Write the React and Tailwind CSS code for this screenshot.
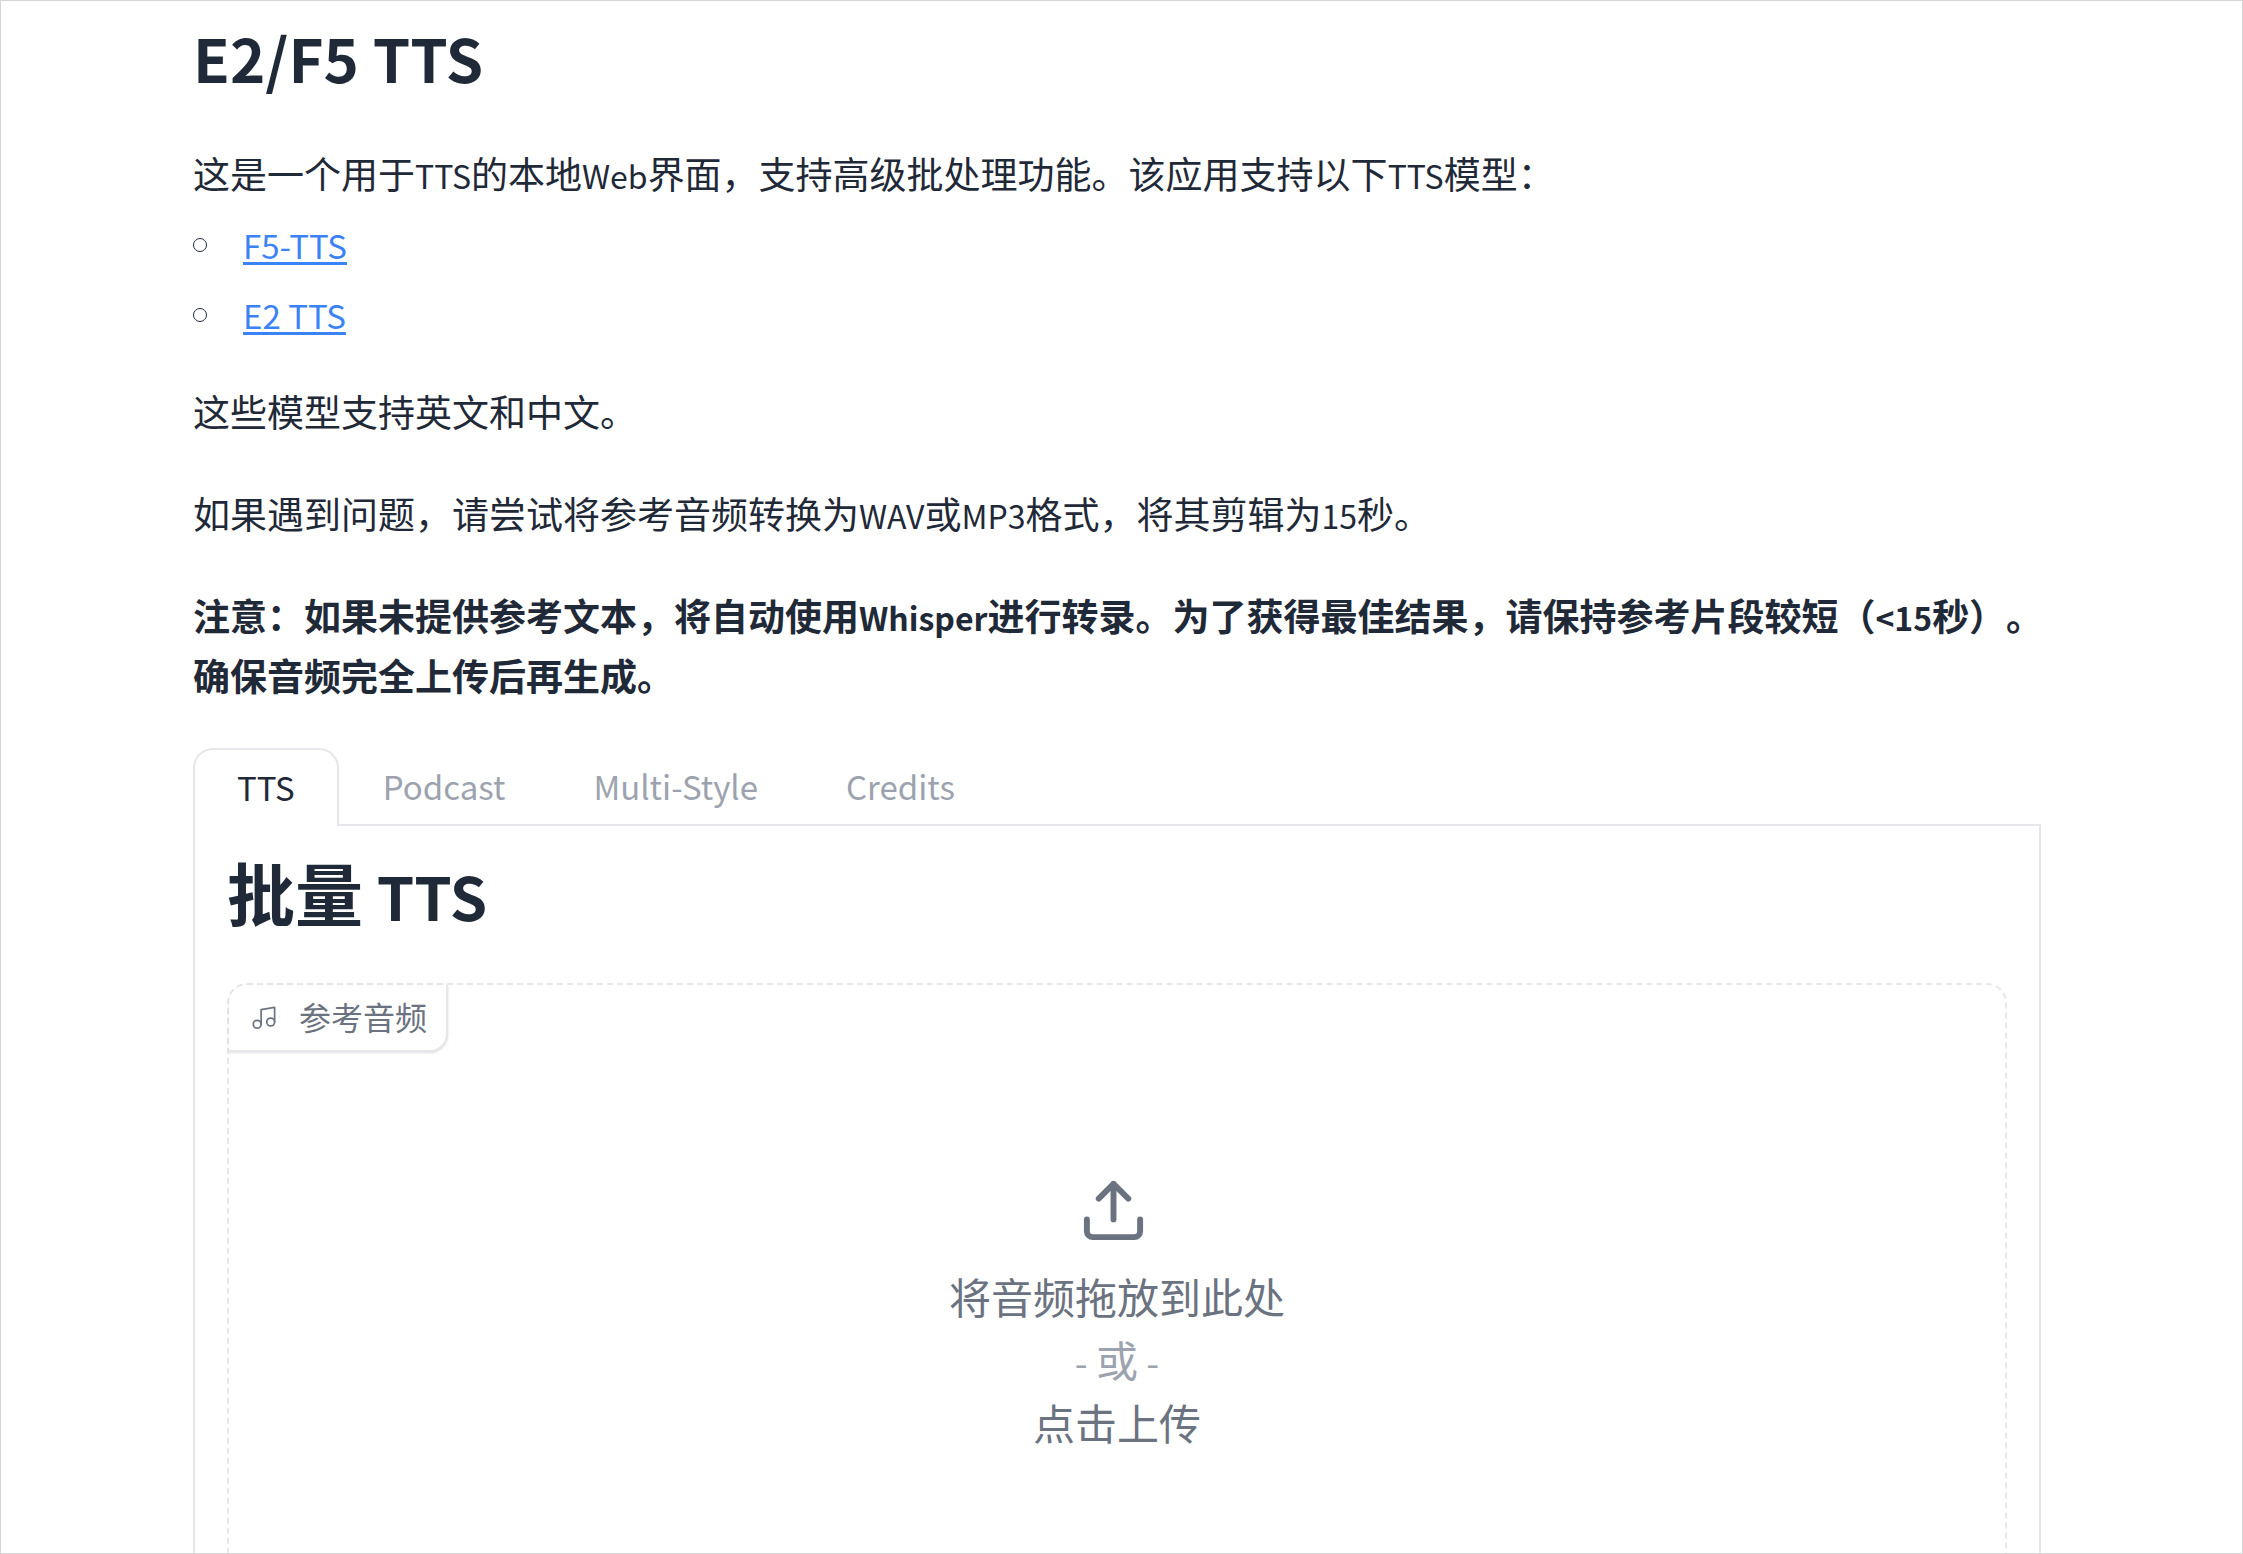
import { useState } from "react";

const models = [
	{ name: "F5-TTS", href: "#f5-tts" },
	{ name: "E2 TTS", href: "#e2-tts" },
];

const tabs = ["TTS", "Podcast", "Multi-Style", "Credits"];

// Latin runs are set a little smaller than the Chinese around them
const En = ({ children }) => (
	<span className="text-[32px] leading-none">{children}</span>
);

const MusicIcon = () => (
	<svg
		viewBox="0 0 24 24"
		className="size-[27px]"
		fill="none"
		stroke="currentColor"
		strokeWidth="1.5"
		strokeLinecap="round"
		strokeLinejoin="round"
	>
		<path d="M9 18V5l12-2v13" />
		<circle cx="5.5" cy="18" r="3.5" />
		<circle cx="17.5" cy="16" r="3.5" />
	</svg>
);

const UploadIcon = () => (
	<svg
		viewBox="0 0 24 24"
		className="mr-2 size-[71px]"
		fill="none"
		stroke="currentColor"
		strokeWidth="2"
		strokeLinecap="round"
		strokeLinejoin="round"
	>
		<path d="M21 15v4a2 2 0 0 1-2 2H5a2 2 0 0 1-2-2v-4" />
		<polyline points="17 8 12 3 7 8" />
		<line x1="12" y1="3" x2="12" y2="15" />
	</svg>
);

const Intro = () => (
	<section className="text-[37px] leading-[60px]">
		<h1 className="text-[60px] leading-[80px] font-semibold">E2/F5 TTS</h1>

		<p className="mt-[46px]">
			这是一个用于<En>TTS</En>的本地<En>Web</En>
			界面，支持高级批处理功能。该应用支持以下<En>TTS</En>模型：
		</p>

		<ul className="mt-3 flex flex-col gap-2.5">
			{models.map((model) => (
				<li key={model.name} className="flex items-center gap-9 text-[33px]">
					<span className="size-3.5 rounded-full border border-[#1f2937]" />
					<a
						href={model.href}
						className="text-[#3b82f6] underline decoration-3 underline-offset-3"
					>
						{model.name}
					</a>
				</li>
			))}
		</ul>

		<p className="mt-9">这些模型支持英文和中文。</p>

		<p className="mt-[42px]">
			如果遇到问题，请尝试将参考音频转换为<En>WAV</En>或<En>MP3</En>
			格式，将其剪辑为<En>15</En>秒。
		</p>

		<p className="mt-[42px] -mr-4 font-bold">
			注意：如果未提供参考文本，将自动使用<En>Whisper</En>
			进行转录。为了获得最佳结果，请保持参考片段较短（<En>&lt;15</En>
			秒）。确保音频完全上传后再生成。
		</p>
	</section>
);

const AudioUpload = () => (
	<div className="relative mt-[41px] h-[660px] rounded-[20px] border-2 border-dashed border-gray-200">
		<div className="absolute top-0 left-0 flex h-[67px] items-center gap-[21px] rounded-tl-[18px] rounded-br-[18px] border-r-2 border-b-2 border-gray-200 bg-white pr-[19px] pl-[22px] text-[32px] leading-none text-[#6b7280] shadow-sm">
			<MusicIcon />
			<span className="pb-1">参考音频</span>
		</div>
		<button
			type="button"
			className="flex h-full w-full cursor-pointer flex-col items-center pt-[190px] text-[42px] leading-[63px] text-[#6b7280]"
		>
			<UploadIcon />
			<span className="mt-[18px]">将音频拖放到此处</span>
			<span className="text-[#9ca3af]">
				<span className="text-[37px] leading-none">- </span>或
				<span className="text-[37px] leading-none"> -</span>
			</span>
			<span>点击上传</span>
		</button>
	</div>
);

const App = () => {
	const [active, setActive] = useState("TTS");

	return (
		<div
			lang="zh-CN"
			className="h-screen overflow-hidden border border-[#d5d5d5] bg-white pt-4 pr-[201px] pl-48 font-['Noto_Sans_CJK_SC',sans-serif] text-[#1f2937] [text-spacing-trim:space-all]"
		>
			<Intro />

			<div role="tablist" className="mt-[43px] flex">
				{tabs.map((tab) => (
					<button
						key={tab}
						type="button"
						role="tab"
						aria-selected={tab === active}
						onClick={() => setActive(tab)}
						className={
							tab === active
								? "h-[78px] cursor-pointer rounded-t-[20px] border-2 border-b-0 border-gray-200 px-[42px] text-[33px] text-[#1f2937]"
								: "h-[78px] cursor-pointer border-b-2 border-gray-200 px-11 pt-0.5 text-[33px] text-[#9ca3af]"
						}
					>
						{tab}
					</button>
				))}
				<div className="grow border-b-2 border-gray-200" />
			</div>

			<div role="tabpanel" className="border-x-2 border-gray-200 px-8 pt-4 pb-8">
				<h2 className="text-[68px] leading-[100px] font-bold">
					批量
					<span className="text-[60px] leading-none font-semibold"> TTS</span>
				</h2>
				<AudioUpload />
			</div>
		</div>
	);
};

export default App;
